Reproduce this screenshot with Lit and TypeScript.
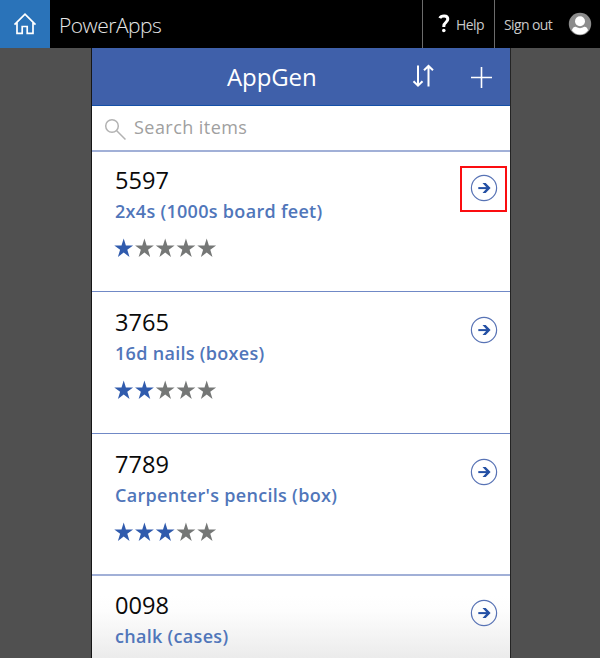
import { LitElement, html, css, svg } from "lit";
import { customElement, property } from "lit/decorators.js";
import { classMap } from "lit/directives/class-map.js";

interface Item {
  code: string;
  name: string;
  rating: number;
  highlighted?: boolean;
}

const items: Item[] = [
  { code: "5597", name: "2x4s (1000s board feet)", rating: 1, highlighted: true },
  { code: "3765", name: "16d nails (boxes)", rating: 2 },
  { code: "7789", name: "Carpenter's pencils (box)", rating: 3 },
  { code: "0098", name: "chalk (cases)", rating: 4 },
];

@customElement("star-rating")
class StarRating extends LitElement {
  @property({ type: Number }) value = 0;

  static styles = css`
    :host { display: block; height: 20px; }
    svg { display: block; overflow: visible; }
    .star { fill: #757776; }
    .star.on { fill: #305bad; }
  `;

  render() {
    return html`<svg width="104" height="20" viewBox="0 0 104 20">
      ${[0, 1, 2, 3, 4].map(
        (i) => svg`<path class=${classMap({ star: true, on: i < this.value })}
          transform="translate(${i * 20.75 - 0.3} 0.4)"
          d="M9 0 11.2 7.1H18.4L12.6 11.4 14.8 18.6 9 14.2 3.2 18.6 5.4 11.4-.4 7.1H6.8Z" />`
      )}
    </svg>`;
  }
}

@customElement("item-row")
class ItemRow extends LitElement {
  @property({ attribute: false }) item!: Item;

  static styles = css`
    :host {
      display: flex;
      justify-content: space-between;
      box-sizing: border-box;
      height: 142px;
      padding: 14px 0 0 23px;
      border-top: 1px solid #7089c6;
    }
    .code { height: 34px; line-height: 33px; font-size: 23.6px; color: #0a0a0a; }
    .name { height: 27px; line-height: 27px; font-size: 18px; font-weight: 600; letter-spacing: 0.3px; color: #5076ba; white-space: nowrap; }
    star-rating { margin-top: 13px; }
    .go { position: relative; width: 28px; height: 28px; margin: 10px 12px 0 0; }
    .go svg { display: block; }
    .focus { position: absolute; left: -10px; top: -8px; width: 47px; height: 46px; box-sizing: border-box; border: 2px solid #fb0d10; }
  `;

  render() {
    return html`
      <div>
        <div class="code">${this.item.code}</div>
        <div class="name">${this.item.name}</div>
        <star-rating .value=${this.item.rating}></star-rating>
      </div>
      <div class="go">
        <svg width="28" height="28" viewBox="0 0 28 28" fill="none">
          <circle cx="14" cy="14" r="12.6" stroke="#5873b5" stroke-width="1.2" />
          <path d="M8.3 14.1H18.5" stroke="#2450a4" stroke-width="2" />
          <path d="M12.5 9.1H15.7L20.6 14.1 15.7 19.1H12.5L17 14.1Z" fill="#2450a4" />
        </svg>
        ${this.item.highlighted ? html`<div class="focus"></div>` : null}
      </div>
    `;
  }
}

@customElement("app-root")
class AppRoot extends LitElement {
  static styles = css`
    :host {
      display: flex;
      flex-direction: column;
      height: 658px;
      overflow: hidden;
      background: #505050;
      font-family: "Open Sans", "Noto Sans", sans-serif;
    }
    .top { display: flex; flex: none; height: 48px; background: #000; color: #c9c9c9; }
    .top svg, .bar svg, .search svg { display: block; flex: none; }
    .home { display: flex; align-items: center; justify-content: center; width: 50px; background: #2a73b9; }
    .brand { flex: 1; padding-left: 9px; line-height: 51px; font-size: 21px; font-weight: 300; letter-spacing: -0.5px; color: #e6e6e6; }
    .cell { display: flex; box-sizing: border-box; border-left: 1px solid #6c6c6c; line-height: 49px; font-size: 14px; letter-spacing: -0.6px; white-space: nowrap; }
    .help { width: 72px; padding-left: 15px; }
    .help svg { margin: 14px 6px 0 0; }
    .account { width: 106px; padding-left: 9px; }
    .account span { width: 64px; }
    .account svg { margin-top: 12px; }
    .phone { flex: 1; min-height: 0; width: 418px; margin-left: 91px; border-left: 1px solid #161616; border-right: 1px solid #242424; background: #fff; overflow: hidden; }
    .bar { display: flex; box-sizing: border-box; height: 58px; padding-left: 135px; background: #3f60aa; border-bottom: 1px solid #1450a8; color: #fff; }
    .title { width: 185px; line-height: 58px; font-size: 24px; letter-spacing: -0.1px; }
    .bar .sort { margin-top: 16px; }
    .bar .add { margin: 18px 0 0 34px; }
    .search { display: flex; height: 44px; padding-left: 12px; line-height: 42px; font-size: 18px; letter-spacing: 0.45px; color: #a0a0a0; }
    .search svg { margin: 12px 7px 0 0; }
    item-row:nth-of-type(odd) { height: 141px; }
    item-row:first-of-type { padding-top: 12px; border-top: 2px solid #a1b0d7; }
    item-row:last-of-type { padding-top: 13px; border-top: 2px solid #a1b0d7; background: linear-gradient(#fff 20px, #fdfdfd 35px, #ebebeb 83px); }
  `;

  render() {
    return html`
      <div class="top">
        <div class="home">
          <svg width="24" height="24" viewBox="0 0 24 24" fill="none" stroke="#fff" stroke-width="1.7">
            <path d="M1.5 12.7 12 2.2 22.5 12.7M4 10.7V21.4H9.2V14.5H14.2V21.4H20V10.7" />
          </svg>
        </div>
        <div class="brand"><span>PowerApps</span></div>
        <div class="cell help">
          <svg width="12" height="19" viewBox="0 0 12 19" fill="none">
            <path d="M1.8 4.2C3.2 1.2 9.8.8 9.8 5.1 9.8 8.7 5.8 8 5.8 12.2V13" stroke="#fff" stroke-width="3" />
            <circle cx="5.8" cy="16.5" r="1.8" fill="#fff" />
          </svg>
          <span>Help</span>
        </div>
        <div class="cell account">
          <span>Sign out</span>
          <svg width="24" height="24" viewBox="0 0 24 24">
            <circle cx="12" cy="12" r="11.2" fill="#8c8c8c" />
            <circle cx="12" cy="9.2" r="5" fill="#fff" />
            <path d="M3.9 18.2C4.8 15.2 7 14.3 8.2 15 10.5 16.5 13.5 16.5 15.8 15 17 14.3 19.2 15.2 20.1 18.2 18.2 21 15.2 22.4 12 22.4S5.8 21 3.9 18.2Z" fill="#fff" />
          </svg>
        </div>
      </div>
      <div class="phone">
        <div class="bar">
          <div class="title"><span>AppGen</span></div>
          <svg class="sort" width="24" height="24" viewBox="0 0 24 24" fill="none" stroke="#fff" stroke-width="2">
            <path d="M6 1.5V21M1.5 17.2 6 21.7 10.5 17.2M16.5 22.5V3M12 6.3 16.5 2 21 6.3" />
          </svg>
          <svg class="add" width="23" height="23" viewBox="0 0 23 23" stroke="#fff" stroke-width="1.6">
            <path d="M1 11.5H22M11.5 1V22" />
          </svg>
        </div>
        <div class="search">
          <svg width="23" height="23" viewBox="0 0 23 23" fill="none" stroke="#b2b2b2" stroke-width="1.5">
            <circle cx="8" cy="8" r="6.3" />
            <path d="M12.5 12.5 21.5 21.5" />
          </svg>
          <span>Search items</span>
        </div>
        ${items.map((item) => html`<item-row .item=${item}></item-row>`)}
      </div>
    `;
  }
}
